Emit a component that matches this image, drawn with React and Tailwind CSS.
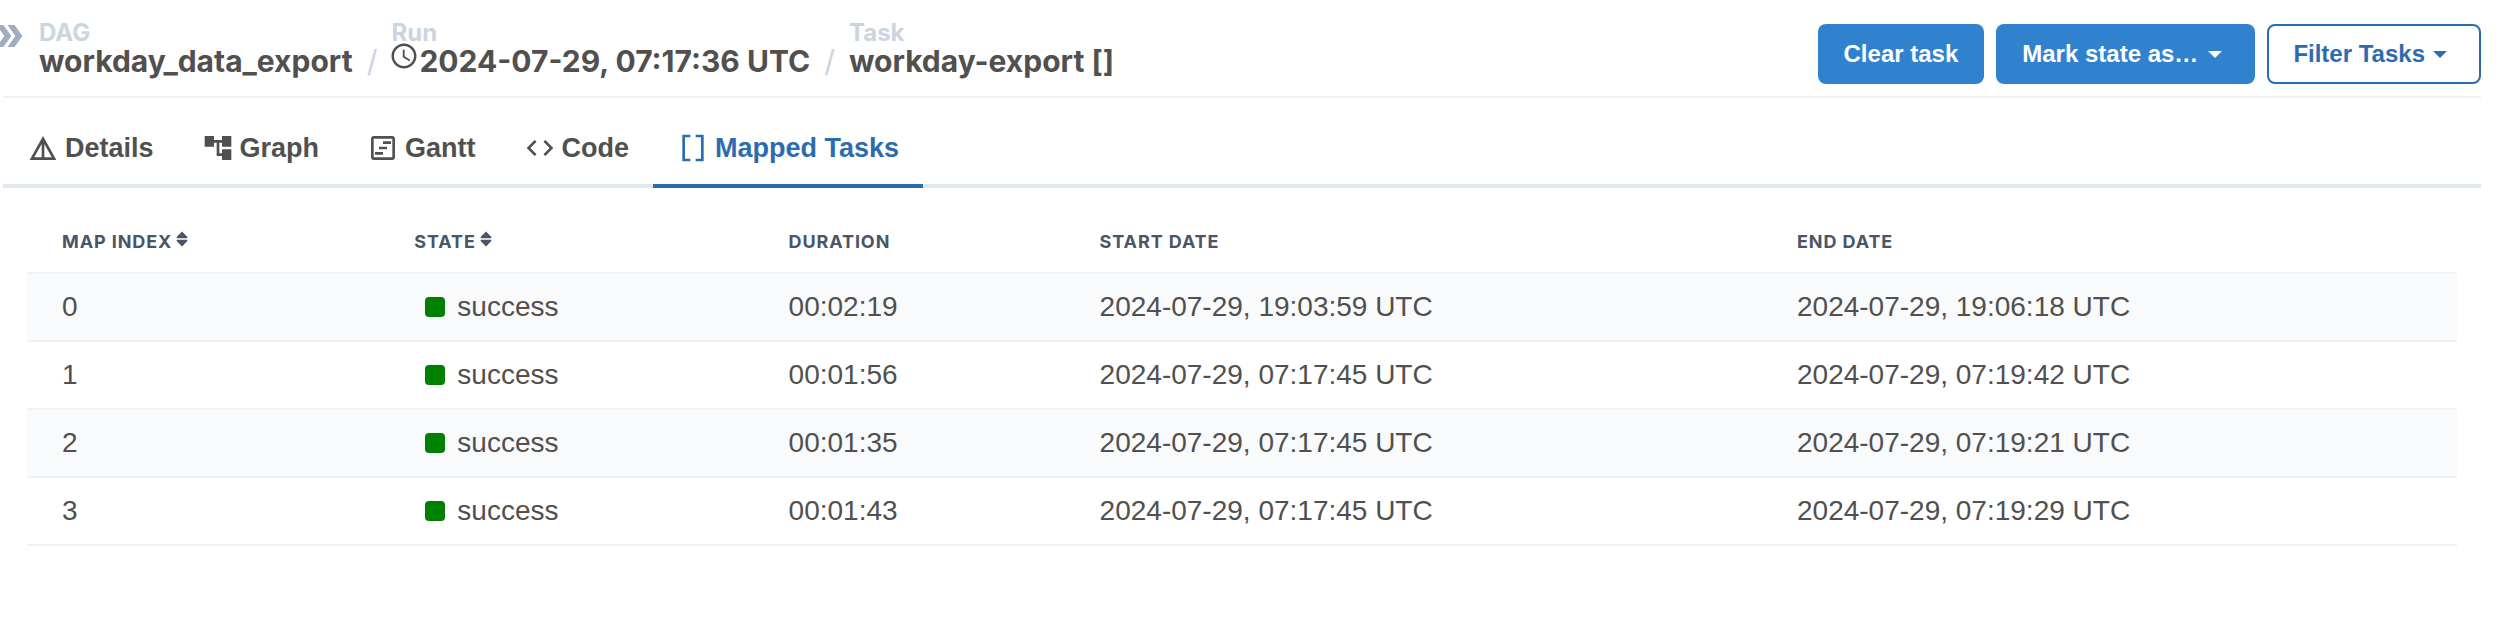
import {
  MdAccountTree,
  MdCode,
  MdDetails,
  MdDoubleArrow,
  MdOutlineViewTimeline,
  MdSchedule,
} from "react-icons/md";
import { BiBracket } from "react-icons/bi";
import { TiArrowUnsorted } from "react-icons/ti";

const tabs = [
  { label: "Details", icon: MdDetails },
  { label: "Graph", icon: MdAccountTree },
  { label: "Gantt", icon: MdOutlineViewTimeline },
  { label: "Code", icon: MdCode },
  { label: "Mapped Tasks", icon: BiBracket, selected: true },
];

const rows = [
  ["0", "success", "00:02:19", "2024-07-29, 19:03:59 UTC", "2024-07-29, 19:06:18 UTC"],
  ["1", "success", "00:01:56", "2024-07-29, 07:17:45 UTC", "2024-07-29, 07:19:42 UTC"],
  ["2", "success", "00:01:35", "2024-07-29, 07:17:45 UTC", "2024-07-29, 07:19:21 UTC"],
  ["3", "success", "00:01:43", "2024-07-29, 07:17:45 UTC", "2024-07-29, 07:19:29 UTC"],
];

const columns = [
  { label: "Map Index", sortable: true, width: "w-[14.5%]" },
  { label: "State", sortable: true, width: "w-[15.4%]" },
  { label: "Duration", width: "w-[12.8%]" },
  { label: "Start Date", width: "w-[28.7%]" },
  { label: "End Date", width: "w-[28.6%]" },
];

function Caret() {
  return (
    <svg viewBox="0 0 14 7" className="h-[7px] w-[14px]" fill="currentColor" aria-hidden="true">
      <path d="M0 0h14L7 7z" />
    </svg>
  );
}

function Crumb({ label, children }) {
  return (
    <a href="#" className="block">
      <span className="block text-[24px] leading-[27px] text-[#cbd5e0]">{label}</span>
      <span className="flex h-[30px] items-center text-[30px] leading-[30px]">{children}</span>
    </a>
  );
}

function Slash() {
  return (
    <span className="self-end px-[14px] text-[30px] leading-[30px] font-normal text-[#cbd5e0]" aria-hidden="true">
      /
    </span>
  );
}

export default function App() {
  return (
    <main className="bg-white pr-[19px] pl-[3px] font-['Liberation_Sans',Arial,sans-serif] text-[#51504f]">
      <header className="flex items-start justify-between border-b-2 border-[#edf2f7] pb-3">
        <div className="flex items-start gap-[11px]">
          <button
            type="button"
            aria-label="Hide grid"
            className="-ml-[3px] flex w-7 justify-end overflow-hidden pt-[17px] text-[#a0aec0]"
          >
            <MdDoubleArrow className="size-[38px] shrink-0" />
          </button>
          <nav aria-label="Breadcrumb" className="flex pt-[19px] font-['Inter',sans-serif] font-bold">
            <Crumb label="DAG">workday_data_export</Crumb>
            <Slash />
            <Crumb label="Run">
              <MdSchedule className="mb-[10px] -ml-[2px] size-[30px]" />
              2024-07-29, 07:17:36 UTC
            </Crumb>
            <Slash />
            <Crumb label="Task">workday-export []</Crumb>
          </nav>
        </div>
        <div className="flex gap-3 pt-6 text-[24px] font-bold">
          <button type="button" className="h-[60px] rounded-lg bg-[#3182ce] px-[26px] text-white">
            Clear task
          </button>
          <button
            type="button"
            className="flex h-[60px] items-center gap-[10px] rounded-lg bg-[#3182ce] pr-[33px] pl-[26px] text-white"
          >
            Mark state as…
            <Caret />
          </button>
          <button
            type="button"
            className="flex h-[60px] items-center gap-2 rounded-lg border-2 border-[#2b6cb0] pr-8 pl-6 text-[#2b6cb0]"
          >
            Filter Tasks
            <Caret />
          </button>
        </div>
      </header>

      <div role="tablist" className="flex border-b-4 border-[#e2e8f0] pt-[18px]">
        {tabs.map(({ label, icon: Icon, selected }) => (
          <button
            key={label}
            type="button"
            role="tab"
            aria-selected={!!selected}
            className={
              selected
                ? "-mb-1 flex h-[72px] items-center gap-[6px] border-b-4 border-[#2b6cb0] px-6 pb-1 text-[27px] font-bold text-[#2b6cb0]"
                : "-mb-1 flex h-[72px] items-center gap-[6px] border-b-4 border-transparent px-6 pb-1 text-[27px] font-bold"
            }
          >
            <Icon className="size-8" />
            {label}
          </button>
        ))}
      </div>

      <div className="pt-6 pr-6 pl-6">
        <table className="w-full table-fixed border-collapse text-left text-[28px]">
          <thead>
            <tr className="h-[61px] border-b-2 border-[#edf2f7]">
              {columns.map(({ label, sortable, width }) => (
                <th
                  key={label}
                  scope="col"
                  className={`${width} pl-[35px] font-['Inter',sans-serif] text-[18px] leading-[26px] font-bold tracking-wider text-[#4a5568] uppercase`}
                >
                  <span className="flex items-start">
                    {label}
                    {sortable && <TiArrowUnsorted className="size-[20px]" />}
                  </span>
                </th>
              ))}
            </tr>
          </thead>
          <tbody>
            {rows.map(([index, state, duration, start, end]) => (
              <tr key={index} className="h-[68px] border-b-2 border-[#edf2f7] odd:bg-[#f8fafc]">
                <td className="pl-[35px]">{index}</td>
                <td className="pl-[35px]">
                  <span className="flex items-center gap-3 pl-[11px]">
                    <span className="size-5 rounded bg-[#008000]" />
                    {state}
                  </span>
                </td>
                <td className="pl-[35px]">{duration}</td>
                <td className="pl-[35px]">{start}</td>
                <td className="pl-[35px]">{end}</td>
              </tr>
            ))}
          </tbody>
        </table>
      </div>
    </main>
  );
}
